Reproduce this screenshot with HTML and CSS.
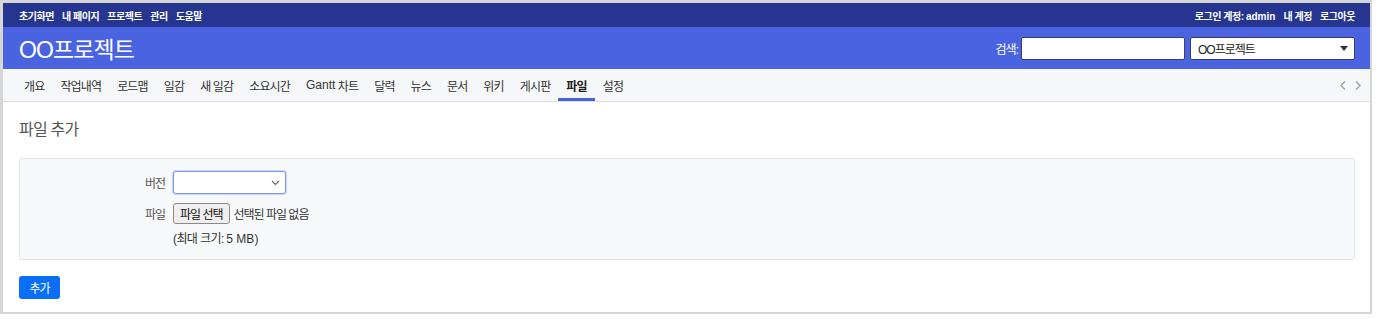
FILE: index.html
```html
<!DOCTYPE html>
<html lang="ko">
<head>
<meta charset="utf-8">
<title>파일 추가</title>
<link rel="stylesheet" href="styles.css">
</head>
<body>
<div class="frame">
  <div class="top-menu">
    <ul class="top-links">
      <li>초기화면</li>
      <li>내 페이지</li>
      <li>프로젝트</li>
      <li>관리</li>
      <li>도움말</li>
    </ul>
    <ul class="top-links">
      <li>로그인 계정: <span class="latin">admin</span></li>
      <li>내 계정</li>
      <li>로그아웃</li>
    </ul>
  </div>
  <div class="header">
    <h1 class="title">OO프로젝트</h1>
    <div class="search">
      <span class="search-label">검색:</span>
      <span class="search-input"></span>
      <span class="project-select">
        <span>OO프로젝트</span>
        <svg class="caret" width="8" height="5" viewBox="0 0 8 5"><path d="M0 0 H8 L4 5 Z" fill="#333"/></svg>
      </span>
    </div>
  </div>
  <div class="main-menu">
    <ul class="tabs">
      <li>개요</li>
      <li>작업내역</li>
      <li>로드맵</li>
      <li>일감</li>
      <li>새 일감</li>
      <li>소요시간</li>
      <li><span class="latin">Gantt</span>&nbsp;차트</li>
      <li>달력</li>
      <li>뉴스</li>
      <li>문서</li>
      <li>위키</li>
      <li>게시판</li>
      <li class="active">파일</li>
      <li>설정</li>
    </ul>
    <div class="tab-scroll">
      <svg width="6" height="9" viewBox="0 0 6 9"><path d="M5 0.5 L1 4.5 L5 8.5" fill="none" stroke="#a0a3a8" stroke-width="1.4"/></svg>
      <svg width="6" height="9" viewBox="0 0 6 9"><path d="M1 0.5 L5 4.5 L1 8.5" fill="none" stroke="#a0a3a8" stroke-width="1.4"/></svg>
    </div>
  </div>
  <div class="content">
    <h2 class="page-title">파일 추가</h2>
    <div class="box">
      <div class="form-grid">
        <span class="label">버전</span>
        <span class="version-select">
          <svg width="9" height="6" viewBox="0 0 9 6"><path d="M1 1 L4.5 4.5 L8 1" fill="none" stroke="#666" stroke-width="1.1"/></svg>
        </span>
        <span class="label">파일</span>
        <span class="file-row">
          <span class="file-button">파일 선택</span>
          <span class="file-none">선택된 파일 없음</span>
        </span>
        <span></span>
        <span class="hint">(최대 크기: <span class="latin">5 MB</span>)</span>
      </div>
    </div>
    <span class="submit">추가</span>
  </div>
</div>
</body>
</html>
```

FILE: styles.css
```css
* { box-sizing: border-box; }
html, body { margin: 0; padding: 0; background: #fff; }
body {
  font-family: "Liberation Sans", "Noto Sans CJK KR", sans-serif;
  font-size: 12px;
  color: #333;
}
ul { list-style: none; margin: 0; padding: 0; }
.latin { letter-spacing: 0; }

.frame {
  width: 1372px;
  height: 314px;
  border-style: solid;
  border-color: #d6d6d6;
  border-width: 3px 2px 2px 3px;
  display: flex;
  flex-direction: column;
  overflow: hidden;
}

.top-menu {
  height: 24px;
  background: #253590;
  color: #fff;
  display: flex;
  justify-content: space-between;
  align-items: center;
  padding: 0 15px 0 16px;
  font-size: 10px;
  font-weight: bold;
  letter-spacing: -0.45px;
}
.top-links { display: flex; gap: 8px; }

.header {
  height: 42px;
  background: #4a64e1;
  display: flex;
  justify-content: space-between;
  align-items: center;
  padding: 0 15px 0 16px;
}
.title {
  margin: 0;
  color: #fff;
  font-size: 23px;
  font-weight: normal;
  letter-spacing: -0.9px;
}
.search { display: flex; align-items: center; }
.search-label { color: #fff; font-size: 12px; letter-spacing: -1px; margin-right: 3px; }
.search-input {
  width: 164px;
  height: 23px;
  background: #fff;
  border: 1px solid #3b3f60;
  border-radius: 2px;
}
.project-select {
  width: 165px;
  height: 23px;
  margin-left: 5px;
  background: #fff;
  border: 1px solid #3b3f60;
  border-radius: 2px;
  display: flex;
  align-items: center;
  justify-content: space-between;
  padding: 0 6px 0 7px;
  font-size: 12px;
  letter-spacing: -1px;
  color: #222;
}

.main-menu {
  height: 33px;
  background: #f6f7f9;
  border-bottom: 1px solid #dcdee3;
  display: flex;
  justify-content: space-between;
  padding: 0 9px 0 13px;
}
.tabs { display: flex; height: 100%; }
.tabs li {
  padding: 0 8px;
  display: flex;
  align-items: center;
  font-size: 12px;
  letter-spacing: -0.85px;
  color: #333;
  border-bottom: 3px solid transparent;
  padding-top: 3px;
}
.tabs li.active {
  font-weight: bold;
  color: #222;
  border-bottom-color: #4a64e1;
}
.tab-scroll { display: flex; align-items: center; gap: 9px; }

.content { padding: 16px 15px 0 16px; }
.page-title {
  margin: 0 0 16px;
  height: 24px;
  line-height: 24px;
  font-size: 16px;
  font-weight: normal;
  color: #555;
  letter-spacing: -0.8px;
}
.box {
  background: #f8f9fa;
  border: 1px solid #e2e4e8;
  border-radius: 3px;
  height: 102px;
  padding: 12px 0 0;
}
.form-grid {
  display: grid;
  grid-template-columns: 145px 1fr;
  column-gap: 8px;
  row-gap: 9px;
  align-items: center;
}
.label {
  text-align: right;
  color: #555;
  letter-spacing: -1px;
}
.version-select {
  width: 113px;
  height: 23px;
  background: #fff;
  border: 1px solid #7e97f2;
  border-radius: 3px;
  box-shadow: 0 0 0 1px #c9d4fa;
  display: flex;
  align-items: center;
  justify-content: flex-end;
  padding-right: 5px;
}
.file-row { display: flex; align-items: center; }
.file-button {
  height: 21px;
  padding: 0 6px;
  display: flex;
  align-items: center;
  background: #efefef;
  border: 1px solid #8a8a8a;
  border-radius: 3px;
  color: #111;
  letter-spacing: -1px;
}
.file-none { margin-left: 4px; letter-spacing: -1px; color: #333; }
.hint { letter-spacing: -0.6px; color: #333; margin-top: -4px; }

.submit {
  display: inline-flex;
  align-items: center;
  justify-content: center;
  margin-top: 16px;
  width: 41px;
  height: 23px;
  background: #0b6ef7;
  border-radius: 3px;
  color: #fff;
  letter-spacing: -1px;
}
```
